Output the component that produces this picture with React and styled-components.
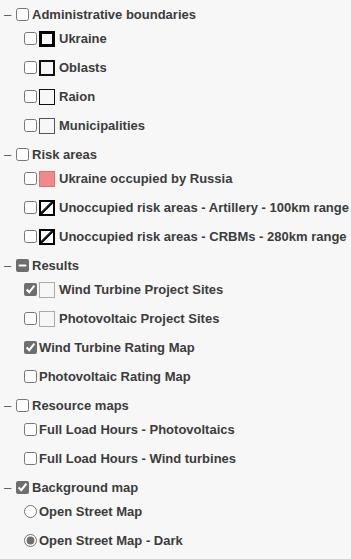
import React, { useEffect, useRef } from 'react'
import styled, { createGlobalStyle } from 'styled-components'

const GlobalStyle = createGlobalStyle`
  html, body {
    margin: 0;
    padding: 0;
    background: #f7f7f7;
  }
  body {
    font-family: "Liberation Sans", Arial, sans-serif;
  }
`

const groups = [
  {
    title: 'Administrative boundaries',
    state: 'off',
    items: [
      { label: 'Ukraine', swatch: 'thick' },
      { label: 'Oblasts', swatch: 'medium' },
      { label: 'Raion', swatch: 'thin' },
      { label: 'Municipalities', swatch: 'hair' },
    ],
  },
  {
    title: 'Risk areas',
    state: 'off',
    items: [
      { label: 'Ukraine occupied by Russia', swatch: 'red' },
      { label: 'Unoccupied risk areas - Artillery - 100km range', swatch: 'hatch' },
      { label: 'Unoccupied risk areas - CRBMs - 280km range', swatch: 'hatch' },
    ],
  },
  {
    title: 'Results',
    state: 'mixed',
    items: [
      { label: 'Wind Turbine Project Sites', swatch: 'light', checked: true },
      { label: 'Photovoltaic Project Sites', swatch: 'light' },
      { label: 'Wind Turbine Rating Map', checked: true },
      { label: 'Photovoltaic Rating Map' },
    ],
  },
  {
    title: 'Resource maps',
    state: 'off',
    items: [
      { label: 'Full Load Hours - Photovoltaics' },
      { label: 'Full Load Hours - Wind turbines' },
    ],
  },
  {
    title: 'Background map',
    state: 'on',
    radio: true,
    items: [
      { label: 'Open Street Map' },
      { label: 'Open Street Map - Dark', checked: true },
    ],
  },
]

const GroupBox = ({ state }) => {
  const ref = useRef(null)
  useEffect(() => {
    if (ref.current) ref.current.indeterminate = state === 'mixed'
  }, [state])
  return <HeaderCheck ref={ref} type='checkbox' defaultChecked={state === 'on'} />
}

const Swatch = ({ kind }) => {
  if (kind === 'hatch') {
    return (
      <Hatch viewBox='0 0 16 16'>
        <rect x='1' y='1' width='14' height='14' fill='#fff' stroke='#000' strokeWidth='2' />
        <line x1='2' y1='14' x2='14' y2='2' stroke='#000' strokeWidth='2' />
        <line x1='2' y1='12' x2='12' y2='2' stroke='#000' strokeWidth='0.6' />
      </Hatch>
    )
  }
  return <Box $kind={kind} />
}

const App = () => {
  return (
    <>
      <GlobalStyle />
      <Panel>
        {groups.map((g) => (
          <Group key={g.title}>
            <Header>
              <Toggle>–</Toggle>
              <GroupBox state={g.state} />
              <span>{g.title}</span>
            </Header>
            {g.items.map((item) => (
              <Row key={item.label}>
                {g.radio ? (
                  <Radio type='radio' name={g.title} defaultChecked={item.checked} />
                ) : (
                  <Check type='checkbox' defaultChecked={item.checked} />
                )}
                {item.swatch && <Swatch kind={item.swatch} />}
                <span>{item.label}</span>
              </Row>
            ))}
          </Group>
        ))}
      </Panel>
    </>
  )
}

export default App

const Panel = styled.div`
  width: 351px;
  padding-top: 4px;
  display: flex;
  flex-direction: column;
  gap: 4px;
  color: #3c3c3c;
  font-size: 13px;
  font-weight: 700;
`
const Group = styled.div`
  display: flex;
  flex-direction: column;
`
const Header = styled.label`
  height: 20px;
  padding-left: 4px;
  display: flex;
  align-items: center;
  white-space: nowrap;
`
const Toggle = styled.span`
  width: 8px;
  font-weight: 400;
  color: #555;
`
const HeaderCheck = styled.input`
  margin: 0 3px 0 4px;
  width: 13px;
  height: 13px;
  accent-color: #6e6e6e;
`
const Row = styled.label`
  height: 29px;
  padding-left: 20px;
  display: flex;
  align-items: center;
  white-space: nowrap;
`
const Check = styled.input`
  margin: 0 2px 0 4px;
  width: 13px;
  height: 13px;
  accent-color: #6e6e6e;
`
const Radio = styled.input`
  margin: 0 2px 0 4px;
  width: 13px;
  height: 13px;
  accent-color: #6e6e6e;
`
const borders = {
  thick: '3px solid #000',
  medium: '2px solid #111',
  thin: '1.5px solid #111',
  hair: '1px solid #555',
  light: '1px solid #aaa',
  red: '1px solid #e07070',
}
const Box = styled.span`
  box-sizing: border-box;
  width: 16px;
  height: 16px;
  margin-right: 4px;
  border: ${(p) => borders[p.$kind]};
  background: ${(p) => (p.$kind === 'red' ? '#f08a8a' : 'transparent')};
`
const Hatch = styled.svg`
  width: 16px;
  height: 16px;
  margin-right: 4px;
`
